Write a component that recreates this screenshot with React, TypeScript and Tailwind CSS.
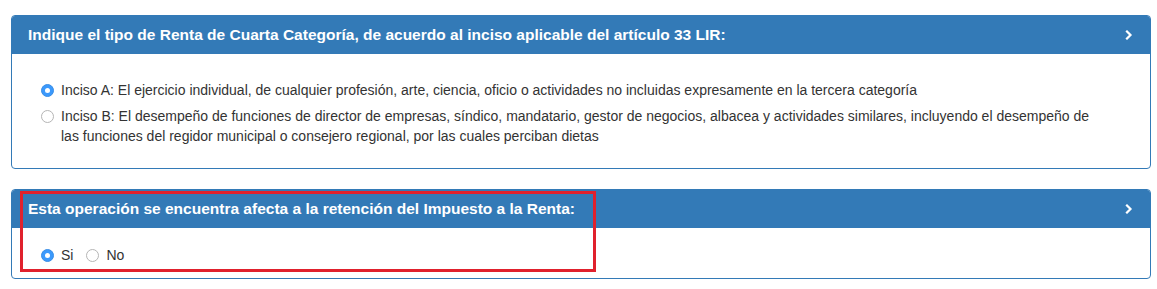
import React from 'react'

function Radio({ checked }: { checked?: boolean }) {
  return checked ? (
    <span className="inline-flex shrink-0 items-center justify-center w-[13px] h-[13px] rounded-full bg-[#3b99fc] border border-[#3a8ee6]">
      <span className="w-[5px] h-[5px] rounded-full bg-white" />
    </span>
  ) : (
    <span className="inline-block shrink-0 w-[13px] h-[13px] rounded-full bg-white border border-[#b5b5b5]" />
  )
}

function Chevron() {
  return (
    <svg width="8" height="10" viewBox="0 0 8 10" className="shrink-0">
      <path d="M2 1.5 L5.5 5 L2 8.5" fill="none" stroke="white" strokeWidth="2.2" strokeLinecap="square" />
    </svg>
  )
}

function PanelHeader({ title }: { title: string }) {
  return (
    <div className="h-[38px] bg-[#337ab7] flex items-center justify-between pl-4 pr-[17px] rounded-t-[3px]">
      <span className="text-white font-bold text-[15.5px]">{title}</span>
      <Chevron />
    </div>
  )
}

export default function App() {
  return (
    <div
      className="w-[1157px] h-[289px] bg-white pl-[11px] pt-[15px] text-[#333] overflow-hidden"
      style={{ fontFamily: '"Liberation Sans", Arial, sans-serif' }}
    >
      {/* Panel 1 */}
      <div className="w-[1140px] border border-[#337ab7] rounded-[4px]">
        <PanelHeader title="Indique el tipo de Renta de Cuarta Categoría, de acuerdo al inciso aplicable del artículo 33 LIR:" />
        <div className="pt-[26px] pb-[22px] pl-[29px] pr-[48px] text-[14px] leading-[20px] flex flex-col gap-[6px]">
          <label className="flex items-start gap-[7px]">
            <span className="h-[20px] flex items-center"><Radio checked /></span>
            <span>
              Inciso A: El ejercicio individual, de cualquier profesión, arte, ciencia, oficio o actividades no incluidas expresamente en la tercera categoría
            </span>
          </label>
          <label className="flex items-start gap-[7px]">
            <span className="h-[20px] flex items-center"><Radio /></span>
            <span>
              Inciso B: El desempeño de funciones de director de empresas, síndico, mandatario, gestor de negocios, albacea y actividades similares, incluyendo el desempeño de las funciones del regidor municipal o consejero regional, por las cuales perciban dietas
            </span>
          </label>
        </div>
      </div>

      {/* Panel 2 */}
      <div className="relative mt-[20px] w-[1140px] border border-[#337ab7] rounded-[4px]">
        <PanelHeader title="Esta operación se encuentra afecta a la retención del Impuesto a la Renta:" />
        <div className="pt-[17px] pb-[13px] pl-[29px] text-[14px] leading-[20px] flex items-center">
          <label className="flex items-center gap-[7px]">
            <Radio checked />
            <span>Si</span>
          </label>
          <label className="flex items-center gap-[7px] ml-[13px]">
            <Radio />
            <span>No</span>
          </label>
        </div>
        {/* highlight box */}
        <div className="absolute left-[8px] top-[1px] w-[576px] h-[81px] border-[3px] border-[#e0212d] pointer-events-none" />
      </div>
    </div>
  )
}
